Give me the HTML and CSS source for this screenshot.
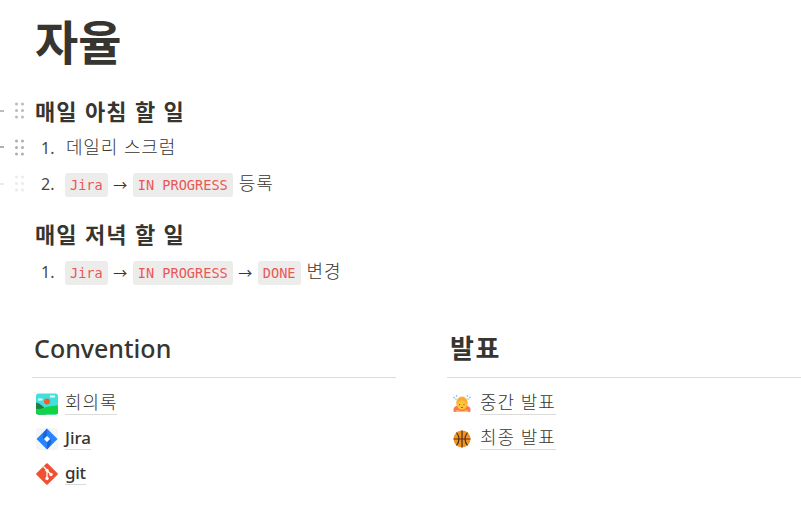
FILE: index.html
```html
<!DOCTYPE html>
<html lang="ko">
<head>
<meta charset="utf-8">
<title>자율</title>
<link rel="stylesheet" href="styles.css">
</head>
<body>
<main class="page">
  <h1>자율</h1>
  <section class="morning">
    <div class="block heading"><span class="grip"><i></i><svg viewBox="0 0 10 17"><path d="M2 2h0M8 2h0M2 8.5h0M8 8.5h0M2 15h0M8 15h0"/></svg></span><h3>매일 아침 할 일</h3></div>
    <div class="block item first"><span class="grip dark"><i></i><svg viewBox="0 0 10 17"><path d="M2 2h0M8 2h0M2 8.5h0M8 8.5h0M2 15h0M8 15h0"/></svg></span><span class="num">1.</span><span class="ko">데일리 스크럼</span></div>
    <div class="block item"><span class="grip faint"><i></i><svg viewBox="0 0 10 17"><path d="M2 2h0M8 2h0M2 8.5h0M8 8.5h0M2 15h0M8 15h0"/></svg></span><span class="num">2.</span><code>Jira</code><span class="arrow">→</span><code>IN PROGRESS</code><span class="ko after">등록</span></div>
  </section>
  <section class="evening">
    <div class="block heading"><span class="grip"></span><h3>매일 저녁 할 일</h3></div>
    <div class="block item"><span class="grip"></span><span class="num">1.</span><code>Jira</code><span class="arrow">→</span><code>IN PROGRESS</code><span class="arrow">→</span><code>DONE</code><span class="ko after">변경</span></div>
  </section>
  <div class="columns">
    <section class="column">
      <h2 class="latin">Convention</h2>
      <a class="link"><svg class="icon" viewBox="0 0 22 22"><defs><clipPath id="card"><rect y=".5" width="22" height="21" rx="2.5"/></clipPath></defs><g clip-path="url(#card)"><path fill="#40e0dc" d="M0 0h22v22H0z"/><path fill="#e6fffb" d="M14 2.500h5v2h-5zM2 5.500h4.500v2H2z"/><circle cx="11" cy="8.500" r="3" fill="#fa5b2b"/><path fill="#247c42" d="M0 9.500Q6 11 10 17v5H0z"/><path fill="#10d347" d="M0 16Q5 16 9 14.500T22 12.500V22H0z"/></g></svg><span class="ko">회의록</span></a>
      <a class="link"><svg class="icon" viewBox="0 0 22 22"><rect width="22" height="22" rx="3" fill="#f4f5f6"/><path fill="#2684ff" d="M11 .5 21.500 11 11 21.500.5 11z"/><path fill="#1665dc" d="M11 .5v7L7.500 11Q5 6.500 11 .5M11 21.500v-7l3.500-3.500Q17 15.500 11 21.500"/><path fill="#fff" d="m11 8 3 3-3 3-3-3z"/></svg><span class="latin">Jira</span></a>
      <a class="link"><svg class="icon" viewBox="0 0 22 22"><path fill="#f05033" stroke="#f05033" stroke-width="2" stroke-linejoin="round" d="m11 1.200 9.800 9.800-9.800 9.800L1.200 11z"/><path fill="none" stroke="#fff" stroke-width="1.300" d="m7.500 3.500 3.500 3.700v8.500M11 7.500l4 4"/><g fill="#fff"><circle cx="11" cy="7.300" r="1.600"/><circle cx="11" cy="15.500" r="1.700"/><circle cx="15" cy="11.500" r="1.700"/></g></svg><span class="latin git">git</span></a>
    </section>
    <section class="column">
      <h2>발표</h2>
      <a class="link"><svg class="icon" viewBox="0 0 22 22"><path fill="#ff7657" d="M2.500 18.500v-2.500q1-3.500 5-3.500h7q4 0 5 3.500v2.500q-2 1-6 0h-5q-4 1-6 0"/><ellipse cx="11" cy="10" rx="5.700" ry="6.500" fill="#fbac2d"/><ellipse cx="11" cy="12" rx="4.800" ry="4.600" fill="#ffc23b"/><path fill="#ffc23b" d="M4.500 18q3-2 4.500 0l-1 1H5zM17.500 18q-3-2-4.500 0l1 1h3z"/><path fill="none" stroke="#a56321" d="M8.500 11v1.200M13 11v1.200M10 14.500h2"/><path fill="none" stroke="#75b8ed" stroke-width="1.200" stroke-dasharray="1.500 1" d="m2.500 4 3 2.500M5 2.500 7 4M19.500 4l-3 2.500M17 2.500 15 4"/></svg><span class="ko">중간 발표</span></a>
      <a class="link"><svg class="icon" viewBox="0 0 22 22"><circle cx="11" cy="11" r="8.500" fill="#f6921e"/><path fill="none" stroke="#4b3522" stroke-width="1.200" d="M11 2.500v17M2.500 11h17M5.500 4.500q5 6.500 0 13M16.500 4.500q-5 6.500 0 13"/></svg><span class="ko">최종 발표</span></a>
    </section>
  </div>
</main>
</body>
</html>
```
FILE: styles.css
```css
* { box-sizing: border-box; }
body {
  margin: 0;
  overflow: hidden;
  background: #fff;
  color: #37352f;
  font-family: "Open Sans", "Noto Sans CJK KR", sans-serif;
}
h1, h2, h3 { margin: 0; font-family: "Noto Sans CJK KR", sans-serif; white-space: nowrap; }
h1 { padding-left: 35px; height: 93px; font-size: 47px; line-height: 79px; }
h3 { padding-left: 1px; font-size: 22px; line-height: 32px; letter-spacing: 1.100px; margin-top: -3px; }
.block { display: flex; align-items: center; height: 35px; white-space: nowrap; }
.heading { height: 36px; }
.first { height: 37px; }
.evening { margin-top: 17px; }
.evening h3 { margin-top: -6px; }
.grip { display: flex; align-items: center; width: 34px; flex: none; color: #bcbbb9; }
.grip i { width: 4px; height: 2px; background: currentColor; margin-right: 10px; }
.grip svg { width: 11px; height: 17px; stroke: currentColor; stroke-width: 3; stroke-linecap: round; }
.grip.dark { color: #b0afac; }
.grip.faint { color: #ebebea; }
.heading .grip, .first .grip { margin-top: -1px; }
.num { width: 31px; padding-left: 7px; font-family: "Noto Sans", sans-serif; font-size: 16px; color: #484640; }
.first .num { padding-top: 1px; }
.ko { font-family: "Noto Sans CJK KR", sans-serif; font-size: 18px; font-weight: 300; letter-spacing: .8px; line-height: 26px; }
.item .ko { margin-top: -3px; }
.first .ko { padding-left: 1px; }
code {
  height: 24px;
  padding: 0 5px;
  margin-top: 3px;
  border-radius: 3px;
  background: #ececeb;
  color: #eb5757;
  font: 13.600px/25px "DejaVu Sans Mono", monospace;
}
.arrow { width: 25px; text-align: center; font: 400 14px/24px "Noto Sans CJK KR", sans-serif; }
.item .after { margin-left: 6px; margin-top: -4px; }
.columns { display: flex; gap: 51px; margin: 36px 0 0 32px; }
.column { width: 364px; flex: none; }
h2 { height: 53px; padding-left: 3px; margin-bottom: 8px; border-bottom: 1px solid #dcdcda; font-size: 26px; line-height: 44px; letter-spacing: 1.500px; }
h2.latin { padding-left: 2px; font-family: "Noto Sans", sans-serif; font-weight: 500; font-size: 25px; line-height: 47px; letter-spacing: 0; }
.link { display: flex; align-items: center; height: 35px; padding-left: 4px; }
.icon { width: 22px; height: 22px; margin-right: 7px; flex: none; }
.link span { height: 24px; line-height: 20px; border-bottom: 1px solid #dbdbd9; }
.link .ko { margin-top: -2px; letter-spacing: .9px; }
.link .latin { font-family: "Noto Sans", sans-serif; font-size: 17px; font-weight: 500; line-height: 23px; margin-top: -1px; }
.link .git { letter-spacing: -.3px; }
```
